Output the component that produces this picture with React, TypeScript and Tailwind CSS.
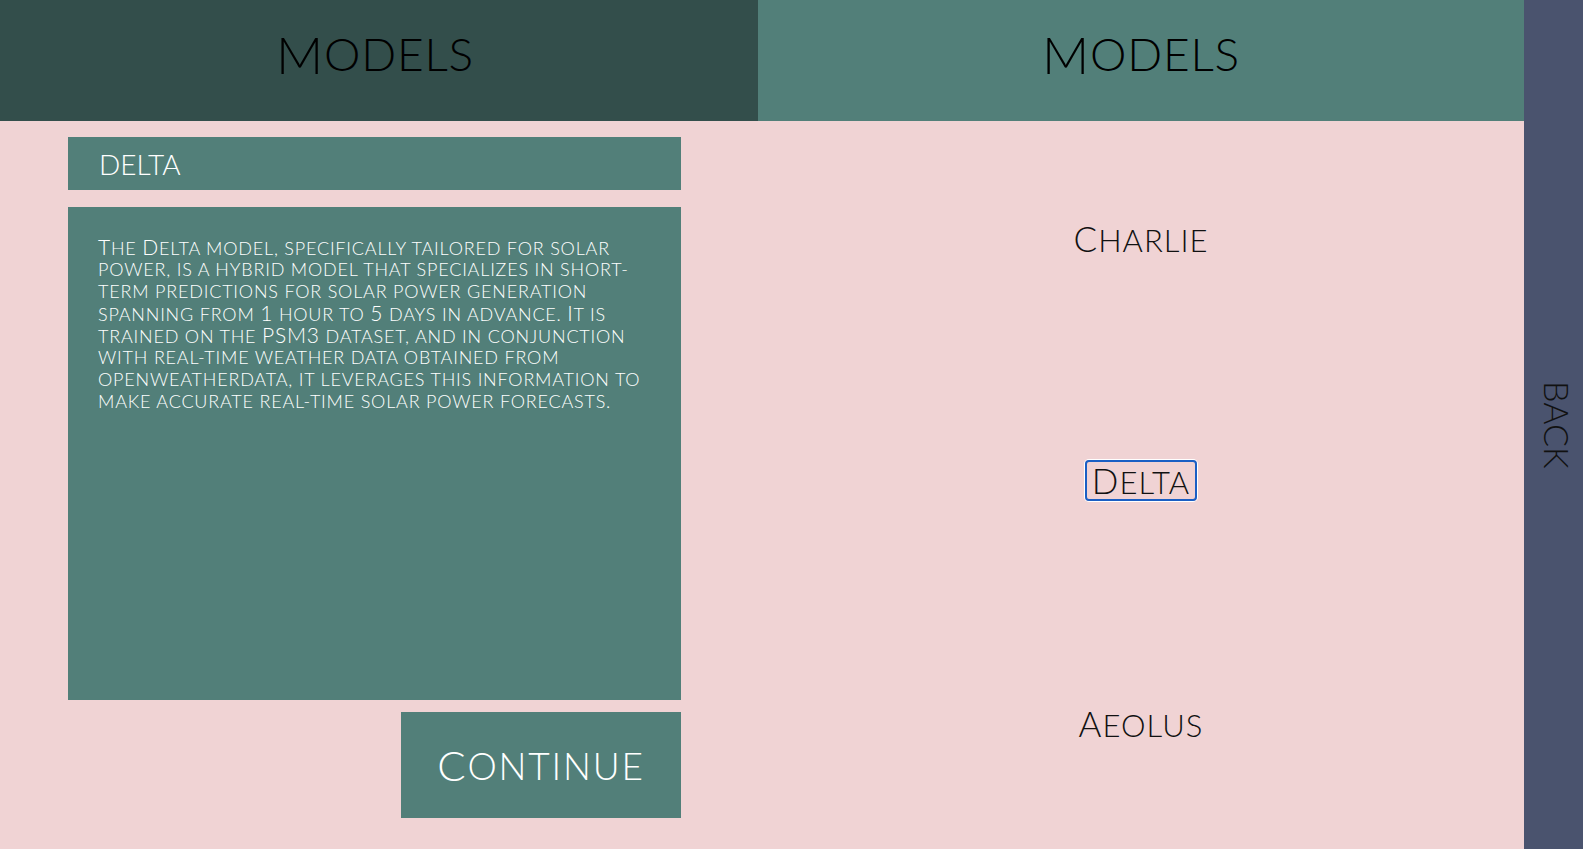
import React from "react";

const LINES = [
  "The Delta model, specifically tailored for solar",
  "power, is a hybrid model that specializes in short-",
  "term predictions for solar power generation",
  "spanning from 1 hour to 5 days in advance. It is",
  "trained on the PSM3 dataset, and in conjunction",
  "with real-time weather data obtained from",
  "openweatherdata, it leverages this information to",
  "make accurate real-time solar power forecasts.",
];

// capitals stay large, everything else is drawn as small capitals
function Caps({ text, big, small }: { text: string; big: string; small: string }) {
  const parts = text.match(/[A-Z0-9]+|[^A-Z0-9]+/g) ?? [];
  return (
    <>
      {parts.map((p, i) =>
        /[A-Z0-9]/.test(p) ? (
          <span key={i} className={big}>
            {p}
          </span>
        ) : (
          <span key={i} className={small}>
            {p.toUpperCase()}
          </span>
        )
      )}
    </>
  );
}

function ModelOption({ name, focused }: { name: string; focused?: boolean }) {
  return (
    <button
      className={
        focused
          ? "mb-[8px] rounded-[4px] border-2 border-[#1a5fc4] px-[5px] py-[1px] leading-none text-[#111] shadow-[0_0_0_1px_#ffffff]"
          : "mb-[8px] border-2 border-transparent px-[5px] py-[1px] leading-none text-[#111]"
      }
    >
      <Caps text={name} big="text-[35px] tracking-[1px]" small="text-[31px] tracking-[1px]" />
    </button>
  );
}

export default function App() {
  return (
    <div className="flex h-[849px] w-full overflow-hidden bg-[#f0d3d4] font-['Lato','Open_Sans',sans-serif] font-light">
      <div className="flex flex-1 flex-col">
        {/* headers */}
        <header className="flex h-[121px] shrink-0 text-black">
          <div className="flex w-[758px] items-center justify-center bg-[#334e4b] pb-[14px] pr-[8px]">
            <Caps text="Models" big="text-[52px] tracking-[0.8px]" small="text-[46px] tracking-[0.8px]" />
          </div>
          <div className="flex flex-1 items-center justify-center bg-[#527f79] pb-[14px]">
            <Caps text="Models" big="text-[52px] tracking-[0.8px]" small="text-[46px] tracking-[0.8px]" />
          </div>
        </header>

        <div className="flex flex-1">
          {/* selected model detail */}
          <section className="flex w-[758px] flex-col pl-[68px] pt-4">
            <div className="flex w-[613px] flex-col">
              <div className="flex h-[53px] items-center bg-[#527f79] pl-[31px] text-white">
                <Caps text="delta" big="text-[32px]" small="text-[28px]" />
              </div>
              <div className="mt-[17px] h-[493px] bg-[#527f79] pl-[30px] pt-[29px] text-white">
                <p className="tracking-[0.8px]">
                  {LINES.map((l) => (
                    <span key={l} className="block h-[22px] whitespace-nowrap leading-[22px]">
                      <Caps text={l} big="text-[21px]" small="text-[18px]" />
                    </span>
                  ))}
                </p>
              </div>
              <button className="mt-3 flex h-[106px] w-[280px] items-center justify-center self-end bg-[#527f79] leading-none text-white">
                <Caps text="Continue" big="text-[42px] tracking-[1.8px]" small="text-[37px] tracking-[1.8px]" />
              </button>
            </div>
          </section>

          {/* model list */}
          <section className="grid flex-1 grid-rows-3 place-items-center">
            <ModelOption name="Charlie" />
            <ModelOption name="Delta" focused />
            <ModelOption name="Aeolus" />
          </section>
        </div>
      </div>

      <aside className="flex w-[59px] shrink-0 items-center justify-center bg-[#4a536e] pl-[6px]">
        <span className="text-[34px] leading-none text-[#111] [writing-mode:vertical-rl]">BACK</span>
      </aside>
    </div>
  );
}
